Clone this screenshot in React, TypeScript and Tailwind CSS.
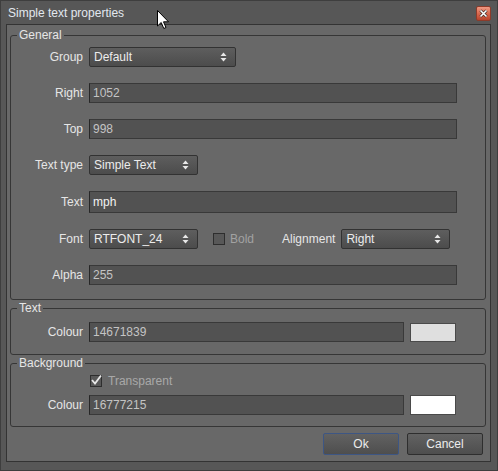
import React from 'react';

const font = { fontFamily: '"Liberation Sans", Arial, sans-serif' };

const SpinArrows = () => (
  <svg width="7" height="10" viewBox="0 0 7 10" className="shrink-0">
    <path d="M3.5 0.5 L6.5 4 L0.5 4 Z" fill="#e8e8e8" />
    <path d="M3.5 9.5 L6.5 6 L0.5 6 Z" fill="#e8e8e8" />
  </svg>
);

const Select: React.FC<{ value: string; width: string }> = ({ value, width }) => (
  <div
    className={`${width} h-[20px] flex items-center justify-between pl-[4px] pr-[8px] border border-[#323232] rounded-[2px] bg-gradient-to-b from-[#5e5e5e] to-[#4c4c4c] text-[#ececec] text-[12px]`}
  >
    <span>{value}</span>
    <SpinArrows />
  </div>
);

const Input: React.FC<{ value: string; width?: string; height?: string; bright?: boolean }> = ({
  value,
  width = 'w-[368px]',
  height = 'h-[20px]',
  bright,
}) => (
  <div
    className={`${width} ${height} flex items-center px-[3px] bg-[#525252] border border-[#393939] border-l-[#262626] text-[12px] ${bright ? 'text-[#f2f2f2]' : 'text-[#c4c4c4]'}`}
  >
    {value}
  </div>
);

const Label: React.FC<{ children: React.ReactNode }> = ({ children }) => (
  <div className="w-[72px] shrink-0 text-right text-[12px] text-[#e6e6e6]">{children}</div>
);

const Row: React.FC<{ label: string; children: React.ReactNode }> = ({ label, children }) => (
  <div className="flex items-center gap-[6px]">
    <Label>{label}</Label>
    {children}
  </div>
);

const Group: React.FC<{ title: string; className?: string; children: React.ReactNode }> = ({
  title,
  className = '',
  children,
}) => (
  <fieldset className={`ml-[3px] mr-[4px] border border-[#363636] rounded-[3px] ${className}`}>
    <legend className="ml-[6px] px-[2px] text-[12px] leading-[13px] text-[#e6e6e6]">{title}</legend>
    {children}
  </fieldset>
);

const CheckBox: React.FC<{ checked?: boolean }> = ({ checked }) => (
  <div className="w-[12px] h-[12px] border border-[#2e2e2e] bg-[#585858] relative shrink-0">
    {checked && (
      <svg width="12" height="12" viewBox="0 0 12 12" className="absolute -left-[1px] -top-[2px]">
        <path d="M2 6 L5 9.5 L11 1.5" stroke="#e8e8e8" strokeWidth="1.8" fill="none" />
      </svg>
    )}
  </div>
);

const Button: React.FC<{ label: string; focused?: boolean }> = ({ label, focused }) => (
  <div
    className={`w-[76px] h-[22px] flex items-center justify-center rounded-[2px] border bg-gradient-to-b from-[#626262] to-[#4e4e4e] text-[12px] text-[#ececec] ${focused ? 'border-[#3d5684]' : 'border-[#2e2e2e]'}`}
  >
    {label}
  </div>
);

export default function App() {
  return (
    <div style={font} className="w-[498px] h-[471px] bg-[#575757] border border-[#3e3e3e] flex flex-col relative">
      <div className="h-[23px] flex items-center justify-between pl-[7px] pr-[6px] shrink-0">
        <span className="text-[12px] text-[#e2e8ef]">Simple text properties</span>
        <div className="w-[15px] h-[15px] mt-[1px] rounded-[2px] border border-[#8c3b2a] bg-gradient-to-b from-[#f09a84] via-[#d8684e] to-[#b8432c] flex items-center justify-center">
          <svg width="9" height="9" viewBox="0 0 9 9">
            <path d="M1.5 1.5 L7.5 7.5 M7.5 1.5 L1.5 7.5" stroke="#3a2a28" strokeWidth="3" />
            <path d="M1.5 1.5 L7.5 7.5 M7.5 1.5 L1.5 7.5" stroke="#ffffff" strokeWidth="1.6" />
          </svg>
        </div>
      </div>

      <div className="ml-[5px] mr-[6px] mb-[8px] flex-1 border border-[#333] bg-[#686868] pt-[4px] flex flex-col">
        <Group title="General" className="pt-[5px] pb-[14px] flex flex-col gap-[16px]">
          <Row label="Group">
            <Select value="Default" width="w-[147px]" />
          </Row>
          <Row label="Right">
            <Input value="1052" />
          </Row>
          <Row label="Top">
            <Input value="998" />
          </Row>
          <Row label="Text type">
            <Select value="Simple Text" width="w-[109px]" />
          </Row>
          <Row label="Text">
            <Input value="mph" height="h-[22px]" bright />
          </Row>
          <Row label="Font">
            <Select value="RTFONT_24" width="w-[109px]" />
            <div className="ml-[9px] flex items-center gap-[5px]">
              <CheckBox />
              <span className="text-[12px] text-[#a2a2a2]">Bold</span>
            </div>
            <span className="ml-[22px] text-[12px] text-[#e6e6e6]">Alignment</span>
            <Select value="Right" width="w-[109px]" />
          </Row>
          <Row label="Alpha">
            <Input value="255" />
          </Row>
        </Group>

        <Group title="Text" className="mt-[2px] pt-[7px] pb-[12px]">
          <div className="flex items-center gap-[6px]">
            <Label>Colour</Label>
            <Input value="14671839" width="w-[315px]" />
            <div className="w-[46px] h-[19px] border border-[#4a4a4a] bg-[#dfdfdf]" />
          </div>
        </Group>

        <Group title="Background" className="mt-[2px] pt-[4px] pb-[11px] flex flex-col gap-[8px]">
          <div className="h-[13px] flex items-center gap-[6px] pl-[79px]">
            <CheckBox checked />
            <span className="text-[12px] text-[#a8a8a8]">Transparent</span>
          </div>
          <div className="flex items-center gap-[6px]">
            <Label>Colour</Label>
            <Input value="16777215" width="w-[315px]" />
            <div className="w-[46px] h-[20px] border border-[#4a4a4a] bg-white" />
          </div>
        </Group>

        <div className="mt-[6px] mr-[7px] flex justify-end gap-[8px]">
          <Button label="Ok" focused />
          <Button label="Cancel" />
        </div>
      </div>

      <svg width="13" height="20" viewBox="0 0 13 20" className="absolute left-[156px] top-[9px]">
        <path d="M0.5 0.5 L0.5 16 L4.2 12.5 L6.8 18.5 L9 17.5 L6.5 11.8 L11.5 11.8 Z" fill="#ffffff" stroke="#000" strokeWidth="1" />
      </svg>
    </div>
  );
}
